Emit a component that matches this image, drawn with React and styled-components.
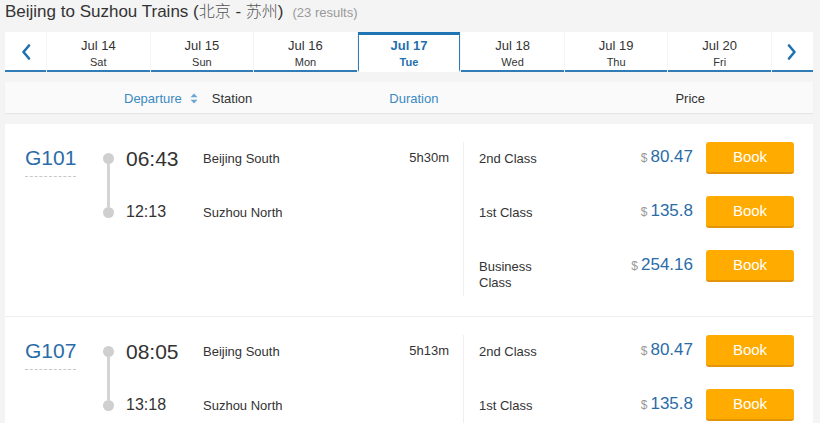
import React from "react";
import styled, { createGlobalStyle } from "styled-components";

const Global = createGlobalStyle`
  html, body { margin: 0; padding: 0; background: #f4f4f4; }
  body { font-family: "Liberation Sans", Arial, sans-serif; color: #333; overflow: hidden; height: 423px; }
  * { box-sizing: border-box; }
`;

const Page = styled.div`
  width: 808px;
  margin-left: 5px;
`;

const Title = styled.h1`
  margin: 0;
  height: 32px;
  padding-top: 1px;
  font-size: 17px;
  font-weight: normal;
  line-height: 22px;
  color: #333;
  display: flex;
  align-items: baseline;
  white-space: pre;
`;

const Cjk = styled.span`
  font-family: "Noto Sans CJK SC", sans-serif;
  font-weight: 300;
  font-size: 16px;
  line-height: 1;
  color: #555;
`;

const Results = styled.span`
  font-size: 13px;
  color: #999;
  margin-left: 9px;
`;

const DateBar = styled.div`
  display: grid;
  grid-template-columns: 41px repeat(7, 1fr) 41px;
  column-gap: 1px;
  height: 40px;
`;

const DateCell = styled.div`
  background: #fff;
  border-bottom: 2px solid ${(p) => (p.$active ? "transparent" : "#2f7cb6")};
  border-top: ${(p) => (p.$active ? "3px solid #1f74b3" : "0")};
  border-left: ${(p) => (p.$active ? "1px solid #2f7cb6" : "0")};
  border-right: ${(p) => (p.$active ? "1px solid #2f7cb6" : "0")};
  display: flex;
  flex-direction: column;
  align-items: center;
  justify-content: center;
  padding-top: ${(p) => (p.$active ? "2px" : "4px")};
  color: ${(p) => (p.$active ? "#1f6fae" : "#333")};
  font-weight: ${(p) => (p.$active ? "bold" : "normal")};
`;

const DateMain = styled.div`
  font-size: 13px;
  line-height: 16px;
`;

const DateDay = styled.div`
  font-size: 11px;
  line-height: 14px;
  margin-top: 1px;
`;

const ArrowCell = styled.div`
  background: #fff;
  border-bottom: 2px solid #2f7cb6;
  display: flex;
  align-items: center;
  justify-content: center;
  padding-top: 1px;
`;

const HeaderRow = styled.div`
  margin-top: 10px;
  height: 31px;
  padding-top: 1px;
  background: #fafafa;
  box-shadow: 0 1px 1px rgba(0, 0, 0, 0.06);
  display: flex;
  align-items: center;
  font-size: 13px;
`;

const HeadLink = styled.span`
  color: #3b89c2;
  display: inline-flex;
  align-items: center;
  margin-left: ${(p) => p.$ml}px;
`;

const HeadText = styled.span`
  color: #333;
  margin-left: ${(p) => p.$ml}px;
`;

const List = styled.div`
  margin-top: 11px;
  background: #fff;
`;

const Card = styled.div`
  display: flex;
  padding: 18px 0 20px 20px;
  border-bottom: 1px solid #efefef;
`;

const TrainCol = styled.div`
  width: 78px;
  flex: none;
`;

const TrainNo = styled.span`
  display: inline-block;
  font-size: 21px;
  line-height: 32px;
  color: #2a6ca8;
  padding-bottom: 2px;
  border-bottom: 1px dashed #c8c8c8;
`;

const Journey = styled.div`
  flex: 1;
  display: flex;
  padding-right: 14px;
`;

const Timeline = styled.div`
  width: 11px;
  flex: none;
  display: flex;
  flex-direction: column;
  align-items: center;
  padding-top: 11px;
  align-self: flex-start;
`;

const Dot = styled.div`
  width: 11px;
  height: 11px;
  border-radius: 50%;
  background: #cfcfcf;
`;

const Line = styled.div`
  width: 3px;
  height: 43px;
  background: #d4d4d4;
`;

const Stops = styled.div`
  flex: 1;
  display: flex;
  flex-direction: column;
  gap: 22px;
  margin-left: 12px;
`;

const Stop = styled.div`
  display: grid;
  grid-template-columns: 77px 1fr auto;
  align-items: center;
  height: 32px;
`;

const Time = styled.div`
  font-size: ${(p) => (p.$big ? 21 : 16)}px;
  color: #333;
  margin-top: ${(p) => (p.$big ? 1 : 0)}px;
`;

const Station = styled.div`
  font-size: 13px;
  color: #333;
`;

const Duration = styled.div`
  font-size: 13px;
  color: #333;
  margin-top: -2px;
`;

const Fares = styled.div`
  width: 350px;
  flex: none;
  border-left: 1px solid #efefef;
  padding: 0 19px 5px 15px;
  display: flex;
  flex-direction: column;
  gap: 22px;
`;

const Fare = styled.div`
  display: flex;
  align-items: flex-start;
`;

const ClassName = styled.div`
  width: 80px;
  font-size: 13px;
  line-height: 16px;
  padding-top: 9px;
  color: #333;
`;

const Price = styled.div`
  flex: 1;
  text-align: right;
  padding-top: 5px;
  margin-right: 13px;
  white-space: nowrap;
`;

const Currency = styled.span`
  font-size: 12px;
  color: #999;
  margin-right: 3px;
`;

const Amount = styled.span`
  font-size: 17px;
  color: #2a6ca8;
`;

const BookButton = styled.button`
  width: 88px;
  height: 32px;
  border: 0;
  border-bottom: 2px solid #e3950a;
  border-radius: 3px;
  background: #ffab00;
  color: #fff;
  font-family: "Liberation Sans", Arial, sans-serif;
  font-size: 15px;
  padding: 0 0 2px;
  cursor: pointer;
`;

const Chevron = ({ dir }) => (
  <svg width="10" height="16" viewBox="0 0 10 16">
    <path
      d={dir === "left" ? "M8 1.5 L2.5 8 L8 14.5" : "M2 1.5 L7.5 8 L2 14.5"}
      fill="none"
      stroke="#1f72b0"
      strokeWidth="2.6"
      strokeLinecap="round"
      strokeLinejoin="round"
    />
  </svg>
);

const SortIcon = () => (
  <svg width="8" height="11" viewBox="0 0 8 11" style={{ marginLeft: 8 }}>
    <path d="M4 0.5 L7.5 4.2 L0.5 4.2 Z" fill="#6aa6d4" />
    <path d="M4 10.5 L7.5 6.8 L0.5 6.8 Z" fill="#6aa6d4" />
  </svg>
);

const dates = [
  ["Jul 14", "Sat"],
  ["Jul 15", "Sun"],
  ["Jul 16", "Mon"],
  ["Jul 17", "Tue", true],
  ["Jul 18", "Wed"],
  ["Jul 19", "Thu"],
  ["Jul 20", "Fri"],
];

const trains = [
  {
    no: "G101",
    dep: "06:43",
    arr: "12:13",
    from: "Beijing South",
    to: "Suzhou North",
    dur: "5h30m",
    fares: [
      ["2nd Class", "80.47"],
      ["1st Class", "135.8"],
      ["Business Class", "254.16"],
    ],
  },
  {
    no: "G107",
    dep: "08:05",
    arr: "13:18",
    from: "Beijing South",
    to: "Suzhou North",
    dur: "5h13m",
    fares: [
      ["2nd Class", "80.47"],
      ["1st Class", "135.8"],
    ],
  },
];

export default function App() {
  return (
    <>
      <Global />
      <Page>
        <Title>
          {"Beijing to Suzhou Trains ("}
          <Cjk>北京</Cjk>
          {" - "}
          <Cjk>苏州</Cjk>
          {")"}
          <Results>(23 results)</Results>
        </Title>
        <DateBar>
          <ArrowCell>
            <Chevron dir="left" />
          </ArrowCell>
          {dates.map(([d, w, active]) => (
            <DateCell key={d} $active={active}>
              <DateMain>{d}</DateMain>
              <DateDay>{w}</DateDay>
            </DateCell>
          ))}
          <ArrowCell>
            <Chevron dir="right" />
          </ArrowCell>
        </DateBar>
        <HeaderRow>
          <HeadLink $ml={119}>
            Departure
            <SortIcon />
          </HeadLink>
          <HeadText $ml={14}>Station</HeadText>
          <HeadLink $ml={137}>Duration</HeadLink>
          <HeadText $ml={237}>Price</HeadText>
        </HeaderRow>
        <List>
          {trains.map((t) => (
            <Card key={t.no}>
              <TrainCol>
                <TrainNo>{t.no}</TrainNo>
              </TrainCol>
              <Journey>
                <Timeline>
                  <Dot />
                  <Line />
                  <Dot />
                </Timeline>
                <Stops>
                  <Stop>
                    <Time $big>{t.dep}</Time>
                    <Station>{t.from}</Station>
                    <Duration>{t.dur}</Duration>
                  </Stop>
                  <Stop>
                    <Time>{t.arr}</Time>
                    <Station>{t.to}</Station>
                  </Stop>
                </Stops>
              </Journey>
              <Fares>
                {t.fares.map(([c, p]) => (
                  <Fare key={c}>
                    <ClassName>{c}</ClassName>
                    <Price>
                      <Currency>$</Currency>
                      <Amount>{p}</Amount>
                    </Price>
                    <BookButton>Book</BookButton>
                  </Fare>
                ))}
              </Fares>
            </Card>
          ))}
        </List>
      </Page>
    </>
  );
}
